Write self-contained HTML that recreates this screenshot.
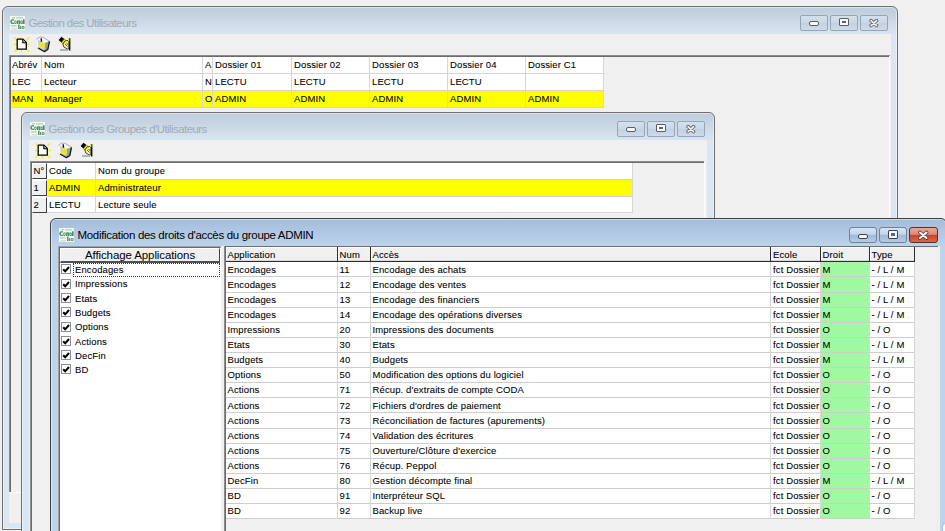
<!DOCTYPE html><html><head><meta charset="utf-8"><style>
*{margin:0;padding:0;box-sizing:border-box}
html,body{width:945px;height:531px;overflow:hidden;background:#f0f0f0;position:relative;font-family:"Liberation Sans",sans-serif;}
.a{position:absolute}
.win{position:absolute;border:1px solid #6f6f6f;border-radius:6px 6px 0 0;box-shadow:inset 0 0 0 1px rgba(255,255,255,.45)}
.inact{background:linear-gradient(#bdcddd 0px,#c7d5e3 10px,#d8e5f1 27px,#dae6f2 28px)}
.act{border-color:#3f3f3f;background:linear-gradient(#a3bcd8 0px,#afc7e2 12px,#bcd3ea 27px,#bdd4eb 28px)}
.client{position:absolute;background:#f0f0f0}
.title{position:absolute;font-size:12px;letter-spacing:-0.55px;white-space:nowrap;line-height:14px}
.tb{position:absolute;height:16px;width:28px;border:1px solid #95a5ba;border-radius:2px;background:linear-gradient(#d4e0ec,#c9d7e6 50%,#c2d1e2 51%,#cfdbe8)}
.tba{position:absolute;height:15.5px;width:28px;border:1px solid #6f829a;border-radius:3px;background:linear-gradient(#d6e4f3,#c3d5ea 45%,#9fb9d6 50%,#b4cbe3)}
.tbc{position:absolute;height:15.5px;width:29px;border:1px solid #5e2a2a;border-radius:3px;background:linear-gradient(#eaa797,#de8a76 45%,#c6452b 52%,#d6684d)}
.t{position:absolute;font-size:9.5px;white-space:nowrap;line-height:12px;letter-spacing:0.12px;color:#000;-webkit-text-stroke:0.08px #000}
.hl{position:absolute;height:1px;background:#d6d6d6}
.vl{position:absolute;width:1px;background:#d6d6d6}
</style></head><body>
<div class="win inact" style="left:2px;top:6px;width:896px;height:524px"></div>
<div class="client" style="left:9px;top:34px;width:882px;height:489px"></div>
<svg class="a" style="left:9.7px;top:16px" width="15" height="14" viewBox="0 0 15 14">
<rect x="0" y="0" width="15" height="14" fill="#f4f8f4"/>
<rect x="2" y="1.2" width="3" height="1.3" fill="#b5d3b8"/><rect x="6" y="1.2" width="7" height="1.3" fill="#b5d3b8"/>
<path d="M0.3 5.5 Q0.3 3.2 2.5 3.2 L4 3.2 L4 4.6 L2.6 4.6 Q1.8 4.6 1.8 5.7 Q1.8 6.8 2.6 6.8 L4 6.8 L4 8 L2.5 8 Q0.3 8 0.3 5.7 Z" fill="#4a8c5e"/>
<rect x="4.3" y="4.4" width="2.3" height="3.6" rx="1" fill="#4f9163"/>
<rect x="7" y="4.4" width="3.4" height="3.6" fill="#4f9163"/>
<rect x="10.6" y="4.4" width="2.2" height="3.6" rx="0.8" fill="#4f9163"/>
<rect x="13" y="3.3" width="1.6" height="4.7" fill="#4a8c5e"/>
<rect x="5" y="5.4" width="0.9" height="1.6" fill="#cfe3d0"/><rect x="8.3" y="5.4" width="0.5" height="2.6" fill="#cfe3d0"/><rect x="11.3" y="5.4" width="0.8" height="1.6" fill="#cfe3d0"/>
<rect x="1" y="9.2" width="5.5" height="1.4" fill="#b5d3b8"/>
<rect x="8" y="8.6" width="1.6" height="4.4" fill="#5d9a6e"/>
<rect x="10" y="10" width="1.2" height="3" fill="#5d9a6e"/>
<rect x="11.6" y="10" width="3" height="3" rx="1.3" fill="#5d9a6e"/><rect x="12.6" y="11" width="1" height="1" fill="#dfeedf"/>
<rect x="1.5" y="12.3" width="5.5" height="1.2" fill="#c5dcc8"/>
</svg>
<div class="title" style="left:28.5px;top:15.7px;font-size:11.5px;letter-spacing:-0.56px;color:#a4a9b2">Gestion des Utilisateurs</div>
<div class="tb" style="left:800px;top:15px"></div>
<div class="tb" style="left:830px;top:15px"></div>
<div class="tb" style="left:860px;top:15px"></div>
<div class="a" style="left:809px;top:21px;width:10px;height:5px;border:1px solid #5a5f66;border-radius:2px;background:#fafafa"></div>
<div class="a" style="left:839px;top:18px;width:10px;height:8px;border:1px solid #5a5f66;border-radius:1px;background:#fafafa"><div class="a" style="left:2px;top:2px;width:4px;height:2px;background:#60656c;border:0"></div></div>
<svg class="a" style="left:868px;top:18px" width="12" height="10" viewBox="0 0 12 10"><path d="M3 2.6 L8.6 7.6 M8.6 2.6 L3 7.6" stroke="#60656c" stroke-width="3.4" stroke-linecap="round"/><path d="M3 2.6 L8.6 7.6 M8.6 2.6 L3 7.6" stroke="#f4f4f4" stroke-width="1.6" stroke-linecap="round"/></svg>
<svg class="a" style="left:13.5px;top:37px" width="16" height="16" viewBox="0 0 16 16">
<g stroke="#f4f400" stroke-width="1.4" stroke-linecap="round"><path d="M0.8 0.8 L3 3 M14.8 0.8 L12.8 2.8 M0.5 7.5 L2 7.5 M15.2 7.5 L14 7.5 M0.8 14.3 L2.8 12.3 M14.8 14.3 L12.8 12.3 M7.5 15 L7.5 13.8 M6 0.7 L6 1.5"/></g>
<path d="M3.2 2.2 L9 2.2 L12.3 5.5 L12.3 12.2 L3.2 12.2 Z" fill="#fff" stroke="#000" stroke-width="1.3" stroke-linejoin="round"/>
<path d="M8.8 2.5 L8.8 5.8 L12 5.8" fill="#ccc" stroke="#000" stroke-width="1.1"/>
</svg>
<svg class="a" style="left:34.0px;top:35px" width="18" height="19" viewBox="0 0 18 19">
<path d="M2.5 4 L6 2 L9 2.3 L15.5 6.3 L13.8 14.5 L10.5 16.6 L4 13 Z" fill="#cfcfcf"/>
<path d="M2.5 4 L6 2 L9 2.3 L15.5 6.3 L11 8 Z" fill="#f6f6f6"/>
<path d="M11 8 L15.5 6.3 L13.8 14.5 L10.5 16.6 Z" fill="#9c9c9c"/>
<path d="M3 4.5 L4.3 12.5" stroke="#ffffff" stroke-width="1"/>
<path d="M2.5 4 L6 2 L9 2.3 L15.5 6.3" fill="none" stroke="#a0a0a0" stroke-width="0.8"/>
<path d="M15.5 6.3 L13.8 14.5 L10.5 16.6 L4 13" fill="none" stroke="#1a1a1a" stroke-width="1.3" stroke-linejoin="round"/>
<path d="M7.2 3.2 L7.5 6.8" stroke="#111" stroke-width="1.4"/>
<path d="M5.5 9 L8 7.5 L10.8 8.5 L11.2 12 L8.5 13.6 L5.4 12 Z" fill="#f2f200"/><circle cx="8.4" cy="10.6" r="1.1" fill="#c8c8a0"/>
</svg>
<svg class="a" style="left:56.0px;top:35px" width="18" height="19" viewBox="0 0 18 19">
<path d="M2.6 5 L5.5 1.8 L8.3 4 L5.4 7.5 Z" fill="#000"/>
<path d="M5.4 7.5 L8.3 4 L9.8 5.4 L6.9 8.9 Z" fill="#f0f000" stroke="#222" stroke-width="0.5"/>
<path d="M6.9 8.9 L9.8 5.4 L11 6 L13 4 L13 13 L11.5 14 L7.8 12 Z" fill="#f7f790" stroke="#1a1a1a" stroke-width="0.8" stroke-linejoin="round"/>
<path d="M9 9 L11.5 11.5 M10.3 7.8 L12.6 10.2" stroke="#333" stroke-width="0.8"/>
<path d="M13.6 3.2 L13.6 15.5" stroke="#101010" stroke-width="1.6"/>
<path d="M12.7 3.5 L12.7 6" stroke="#f0f000" stroke-width="1.3"/>
<path d="M4 15 L12 15" stroke="#8c8c8c" stroke-width="1.2"/>
</svg>
<div class="a" style="left:9px;top:55px;width:881px;height:1px;background:#8c8c8c;"></div>
<div class="a" style="left:9px;top:55px;width:1px;height:437px;background:#8c8c8c;"></div>
<div class="a" style="left:10px;top:56px;width:880px;height:1px;background:#6c6c6c;"></div>
<div class="a" style="left:10px;top:56px;width:1px;height:436px;background:#6c6c6c;"></div>
<div class="a" style="left:9px;top:492px;width:881px;height:1px;background:#ffffff;"></div>
<div class="a" style="left:889px;top:56px;width:1px;height:437px;background:#fbfbfb;"></div>
<div class="a" style="left:11px;top:57px;width:593px;height:50px;background:#ffffff;"></div>
<div class="a" style="left:11px;top:91px;width:593px;height:16px;background:#ffff00;"></div>
<div class="vl" style="left:41px;top:57px;height:50px"></div>
<div class="vl" style="left:202px;top:57px;height:50px"></div>
<div class="vl" style="left:212px;top:57px;height:50px"></div>
<div class="vl" style="left:291px;top:57px;height:50px"></div>
<div class="vl" style="left:369px;top:57px;height:50px"></div>
<div class="vl" style="left:447px;top:57px;height:50px"></div>
<div class="vl" style="left:525px;top:57px;height:50px"></div>
<div class="vl" style="left:603px;top:57px;height:50px"></div>
<div class="hl" style="left:11px;top:73px;width:593px"></div>
<div class="hl" style="left:11px;top:90px;width:593px"></div>
<div class="hl" style="left:11px;top:107px;width:593px"></div>
<div class="t" style="left:12px;top:58.94px;">Abrév</div>
<div class="t" style="left:44px;top:58.94px;">Nom</div>
<div class="t" style="left:205px;top:58.94px;">A</div>
<div class="t" style="left:215px;top:58.94px;">Dossier 01</div>
<div class="t" style="left:294px;top:58.94px;">Dossier 02</div>
<div class="t" style="left:372px;top:58.94px;">Dossier 03</div>
<div class="t" style="left:450px;top:58.94px;">Dossier 04</div>
<div class="t" style="left:528px;top:58.94px;">Dossier C1</div>
<div class="t" style="left:12px;top:75.84px;">LEC</div>
<div class="t" style="left:44px;top:75.84px;">Lecteur</div>
<div class="t" style="left:205px;top:75.84px;">N</div>
<div class="t" style="left:215px;top:75.84px;">LECTU</div>
<div class="t" style="left:294px;top:75.84px;">LECTU</div>
<div class="t" style="left:372px;top:75.84px;">LECTU</div>
<div class="t" style="left:450px;top:75.84px;">LECTU</div>
<div class="t" style="left:12px;top:92.74px;">MAN</div>
<div class="t" style="left:44px;top:92.74px;">Manager</div>
<div class="t" style="left:205px;top:92.74px;">O</div>
<div class="t" style="left:215px;top:92.74px;">ADMIN</div>
<div class="t" style="left:294px;top:92.74px;">ADMIN</div>
<div class="t" style="left:372px;top:92.74px;">ADMIN</div>
<div class="t" style="left:450px;top:92.74px;">ADMIN</div>
<div class="t" style="left:528px;top:92.74px;">ADMIN</div>
<div class="win inact" style="left:21px;top:112px;width:694px;height:449px"></div>
<div class="client" style="left:29px;top:140px;width:678px;height:400px"></div>
<svg class="a" style="left:29.7px;top:122px" width="15" height="14" viewBox="0 0 15 14">
<rect x="0" y="0" width="15" height="14" fill="#f4f8f4"/>
<rect x="2" y="1.2" width="3" height="1.3" fill="#b5d3b8"/><rect x="6" y="1.2" width="7" height="1.3" fill="#b5d3b8"/>
<path d="M0.3 5.5 Q0.3 3.2 2.5 3.2 L4 3.2 L4 4.6 L2.6 4.6 Q1.8 4.6 1.8 5.7 Q1.8 6.8 2.6 6.8 L4 6.8 L4 8 L2.5 8 Q0.3 8 0.3 5.7 Z" fill="#4a8c5e"/>
<rect x="4.3" y="4.4" width="2.3" height="3.6" rx="1" fill="#4f9163"/>
<rect x="7" y="4.4" width="3.4" height="3.6" fill="#4f9163"/>
<rect x="10.6" y="4.4" width="2.2" height="3.6" rx="0.8" fill="#4f9163"/>
<rect x="13" y="3.3" width="1.6" height="4.7" fill="#4a8c5e"/>
<rect x="5" y="5.4" width="0.9" height="1.6" fill="#cfe3d0"/><rect x="8.3" y="5.4" width="0.5" height="2.6" fill="#cfe3d0"/><rect x="11.3" y="5.4" width="0.8" height="1.6" fill="#cfe3d0"/>
<rect x="1" y="9.2" width="5.5" height="1.4" fill="#b5d3b8"/>
<rect x="8" y="8.6" width="1.6" height="4.4" fill="#5d9a6e"/>
<rect x="10" y="10" width="1.2" height="3" fill="#5d9a6e"/>
<rect x="11.6" y="10" width="3" height="3" rx="1.3" fill="#5d9a6e"/><rect x="12.6" y="11" width="1" height="1" fill="#dfeedf"/>
<rect x="1.5" y="12.3" width="5.5" height="1.2" fill="#c5dcc8"/>
</svg>
<div class="title" style="left:48.5px;top:121.7px;font-size:11.5px;letter-spacing:-0.56px;color:#a4a9b2">Gestion des Groupes d'Utilisateurs</div>
<div class="tb" style="left:617px;top:121px"></div>
<div class="tb" style="left:647px;top:121px"></div>
<div class="tb" style="left:677px;top:121px"></div>
<div class="a" style="left:626px;top:127px;width:10px;height:5px;border:1px solid #5a5f66;border-radius:2px;background:#fafafa"></div>
<div class="a" style="left:656px;top:124px;width:10px;height:8px;border:1px solid #5a5f66;border-radius:1px;background:#fafafa"><div class="a" style="left:2px;top:2px;width:4px;height:2px;background:#60656c;border:0"></div></div>
<svg class="a" style="left:685px;top:124px" width="12" height="10" viewBox="0 0 12 10"><path d="M3 2.6 L8.6 7.6 M8.6 2.6 L3 7.6" stroke="#60656c" stroke-width="3.4" stroke-linecap="round"/><path d="M3 2.6 L8.6 7.6 M8.6 2.6 L3 7.6" stroke="#f4f4f4" stroke-width="1.6" stroke-linecap="round"/></svg>
<svg class="a" style="left:35.2px;top:143px" width="16" height="16" viewBox="0 0 16 16">
<g stroke="#f4f400" stroke-width="1.4" stroke-linecap="round"><path d="M0.8 0.8 L3 3 M14.8 0.8 L12.8 2.8 M0.5 7.5 L2 7.5 M15.2 7.5 L14 7.5 M0.8 14.3 L2.8 12.3 M14.8 14.3 L12.8 12.3 M7.5 15 L7.5 13.8 M6 0.7 L6 1.5"/></g>
<path d="M3.2 2.2 L9 2.2 L12.3 5.5 L12.3 12.2 L3.2 12.2 Z" fill="#fff" stroke="#000" stroke-width="1.3" stroke-linejoin="round"/>
<path d="M8.8 2.5 L8.8 5.8 L12 5.8" fill="#ccc" stroke="#000" stroke-width="1.1"/>
</svg>
<svg class="a" style="left:55.7px;top:141px" width="18" height="19" viewBox="0 0 18 19">
<path d="M2.5 4 L6 2 L9 2.3 L15.5 6.3 L13.8 14.5 L10.5 16.6 L4 13 Z" fill="#cfcfcf"/>
<path d="M2.5 4 L6 2 L9 2.3 L15.5 6.3 L11 8 Z" fill="#f6f6f6"/>
<path d="M11 8 L15.5 6.3 L13.8 14.5 L10.5 16.6 Z" fill="#9c9c9c"/>
<path d="M3 4.5 L4.3 12.5" stroke="#ffffff" stroke-width="1"/>
<path d="M2.5 4 L6 2 L9 2.3 L15.5 6.3" fill="none" stroke="#a0a0a0" stroke-width="0.8"/>
<path d="M15.5 6.3 L13.8 14.5 L10.5 16.6 L4 13" fill="none" stroke="#1a1a1a" stroke-width="1.3" stroke-linejoin="round"/>
<path d="M7.2 3.2 L7.5 6.8" stroke="#111" stroke-width="1.4"/>
<path d="M5.5 9 L8 7.5 L10.8 8.5 L11.2 12 L8.5 13.6 L5.4 12 Z" fill="#f2f200"/><circle cx="8.4" cy="10.6" r="1.1" fill="#c8c8a0"/>
</svg>
<svg class="a" style="left:77.7px;top:141px" width="18" height="19" viewBox="0 0 18 19">
<path d="M2.6 5 L5.5 1.8 L8.3 4 L5.4 7.5 Z" fill="#000"/>
<path d="M5.4 7.5 L8.3 4 L9.8 5.4 L6.9 8.9 Z" fill="#f0f000" stroke="#222" stroke-width="0.5"/>
<path d="M6.9 8.9 L9.8 5.4 L11 6 L13 4 L13 13 L11.5 14 L7.8 12 Z" fill="#f7f790" stroke="#1a1a1a" stroke-width="0.8" stroke-linejoin="round"/>
<path d="M9 9 L11.5 11.5 M10.3 7.8 L12.6 10.2" stroke="#333" stroke-width="0.8"/>
<path d="M13.6 3.2 L13.6 15.5" stroke="#101010" stroke-width="1.6"/>
<path d="M12.7 3.5 L12.7 6" stroke="#f0f000" stroke-width="1.3"/>
<path d="M4 15 L12 15" stroke="#8c8c8c" stroke-width="1.2"/>
</svg>
<div class="a" style="left:30px;top:161px;width:674px;height:1px;background:#8c8c8c;"></div>
<div class="a" style="left:30px;top:161px;width:1px;height:400px;background:#8c8c8c;"></div>
<div class="a" style="left:31px;top:162px;width:673px;height:1px;background:#6c6c6c;"></div>
<div class="a" style="left:31px;top:162px;width:1px;height:400px;background:#6c6c6c;"></div>
<div class="a" style="left:704px;top:162px;width:1px;height:400px;background:#ffffff;"></div>
<div class="a" style="left:32px;top:163px;width:601px;height:50px;background:#ffffff;"></div>
<div class="a" style="left:47px;top:180px;width:586px;height:16px;background:#ffff00;"></div>
<div class="a" style="left:32px;top:163px;width:15px;height:16px;background:#f0f0f0;border-left:1px solid #fff;border-top:1px solid #fff;border-right:1px solid #404040;border-bottom:1px solid #404040"></div>
<div class="a" style="left:32px;top:180px;width:15px;height:16px;background:#f0f0f0;border-left:1px solid #fff;border-top:1px solid #fff;border-right:1px solid #404040;border-bottom:1px solid #404040"></div>
<div class="a" style="left:32px;top:197px;width:15px;height:16px;background:#f0f0f0;border-left:1px solid #fff;border-top:1px solid #fff;border-right:1px solid #404040;border-bottom:1px solid #404040"></div>
<div class="vl" style="left:95px;top:163px;height:50px"></div>
<div class="vl" style="left:632px;top:163px;height:50px"></div>
<div class="hl" style="left:47px;top:179px;width:586px"></div>
<div class="hl" style="left:47px;top:196px;width:586px"></div>
<div class="hl" style="left:47px;top:212px;width:586px"></div>
<div class="t" style="left:33.5px;top:164.84px;">N°</div>
<div class="t" style="left:49px;top:164.84px;">Code</div>
<div class="t" style="left:98px;top:164.84px;">Nom du groupe</div>
<div class="t" style="left:33.5px;top:181.74px;">1</div>
<div class="t" style="left:49px;top:181.74px;">ADMIN</div>
<div class="t" style="left:98px;top:181.74px;">Administrateur</div>
<div class="t" style="left:33.5px;top:198.54px;">2</div>
<div class="t" style="left:49px;top:198.54px;">LECTU</div>
<div class="t" style="left:98px;top:198.54px;">Lecture seule</div>
<div class="win act" style="left:50px;top:218px;width:897px;height:343px"></div>
<div class="client" style="left:58px;top:246px;width:882px;height:300px"></div>
<svg class="a" style="left:58.7px;top:228px" width="15" height="14" viewBox="0 0 15 14">
<rect x="0" y="0" width="15" height="14" fill="#f4f8f4"/>
<rect x="2" y="1.2" width="3" height="1.3" fill="#b5d3b8"/><rect x="6" y="1.2" width="7" height="1.3" fill="#b5d3b8"/>
<path d="M0.3 5.5 Q0.3 3.2 2.5 3.2 L4 3.2 L4 4.6 L2.6 4.6 Q1.8 4.6 1.8 5.7 Q1.8 6.8 2.6 6.8 L4 6.8 L4 8 L2.5 8 Q0.3 8 0.3 5.7 Z" fill="#4a8c5e"/>
<rect x="4.3" y="4.4" width="2.3" height="3.6" rx="1" fill="#4f9163"/>
<rect x="7" y="4.4" width="3.4" height="3.6" fill="#4f9163"/>
<rect x="10.6" y="4.4" width="2.2" height="3.6" rx="0.8" fill="#4f9163"/>
<rect x="13" y="3.3" width="1.6" height="4.7" fill="#4a8c5e"/>
<rect x="5" y="5.4" width="0.9" height="1.6" fill="#cfe3d0"/><rect x="8.3" y="5.4" width="0.5" height="2.6" fill="#cfe3d0"/><rect x="11.3" y="5.4" width="0.8" height="1.6" fill="#cfe3d0"/>
<rect x="1" y="9.2" width="5.5" height="1.4" fill="#b5d3b8"/>
<rect x="8" y="8.6" width="1.6" height="4.4" fill="#5d9a6e"/>
<rect x="10" y="10" width="1.2" height="3" fill="#5d9a6e"/>
<rect x="11.6" y="10" width="3" height="3" rx="1.3" fill="#5d9a6e"/><rect x="12.6" y="11" width="1" height="1" fill="#dfeedf"/>
<rect x="1.5" y="12.3" width="5.5" height="1.2" fill="#c5dcc8"/>
</svg>
<div class="title" style="left:77.5px;top:227.6px;font-size:11.5px;letter-spacing:-0.32px;color:#000">Modification des droits d'accès du groupe ADMIN</div>
<div class="tba" style="left:849px;top:227px"></div>
<div class="tba" style="left:879px;top:227px"></div>
<div class="tbc" style="left:909px;top:227px"></div>
<div class="a" style="left:858px;top:234px;width:10px;height:5px;border:1px solid #3c4450;border-radius:2px;background:#fafafa"></div>
<div class="a" style="left:888px;top:230px;width:10px;height:9px;border:1px solid #3c4450;border-radius:1px;background:#fafafa"><div class="a" style="left:2px;top:2px;width:4px;height:3px;background:#4a6a90;border:0"></div></div>
<svg class="a" style="left:917px;top:230px" width="13" height="10" viewBox="0 0 13 10"><path d="M3 2.5 L9.5 8 M9.5 2.5 L3 8" stroke="#5a3434" stroke-width="3.6" stroke-linecap="round"/><path d="M3 2.5 L9.5 8 M9.5 2.5 L3 8" stroke="#ffffff" stroke-width="2" stroke-linecap="round"/></svg>
<div class="a" style="left:58px;top:246px;width:163px;height:290px;background:#ffffff;border-left:1px solid #a0a0a0;border-top:1px solid #a0a0a0;"></div>
<div class="a" style="left:59px;top:247px;width:162px;height:290px;background:transparent;border-left:1px solid #696969;border-top:1px solid #696969;border-right:1px solid #fff"></div>
<div class="a" style="left:60px;top:248px;width:160px;height:15px;background:#f0f0f0;border-top:1px solid #fff;border-left:1px solid #fff;border-bottom:2px solid #505050;border-right:1px solid #404040"></div>
<div class="a" style="left:60px;top:248px;width:160px;text-align:center;font-size:11.5px;line-height:14px;letter-spacing:-0.1px;white-space:nowrap">Affichage Applications</div>
<div class="a" style="left:61px;top:264.30px;width:10px;height:10px;border:1px solid #8f8f8f;background:#fff"></div>
<svg class="a" style="left:62px;top:265.30px" width="8" height="8" viewBox="0 0 8 8"><path d="M1.2 4.2 L3.2 6.3 L7 2" fill="none" stroke="#000" stroke-width="2"/></svg>
<div class="t" style="left:75px;top:264.04px;">Encodages</div>
<div class="a" style="left:61px;top:278.60px;width:10px;height:10px;border:1px solid #8f8f8f;background:#fff"></div>
<svg class="a" style="left:62px;top:279.60px" width="8" height="8" viewBox="0 0 8 8"><path d="M1.2 4.2 L3.2 6.3 L7 2" fill="none" stroke="#000" stroke-width="2"/></svg>
<div class="t" style="left:75px;top:278.34px;">Impressions</div>
<div class="a" style="left:61px;top:292.90px;width:10px;height:10px;border:1px solid #8f8f8f;background:#fff"></div>
<svg class="a" style="left:62px;top:293.90px" width="8" height="8" viewBox="0 0 8 8"><path d="M1.2 4.2 L3.2 6.3 L7 2" fill="none" stroke="#000" stroke-width="2"/></svg>
<div class="t" style="left:75px;top:292.64px;">Etats</div>
<div class="a" style="left:61px;top:307.20px;width:10px;height:10px;border:1px solid #8f8f8f;background:#fff"></div>
<svg class="a" style="left:62px;top:308.20px" width="8" height="8" viewBox="0 0 8 8"><path d="M1.2 4.2 L3.2 6.3 L7 2" fill="none" stroke="#000" stroke-width="2"/></svg>
<div class="t" style="left:75px;top:306.94px;">Budgets</div>
<div class="a" style="left:61px;top:321.50px;width:10px;height:10px;border:1px solid #8f8f8f;background:#fff"></div>
<svg class="a" style="left:62px;top:322.50px" width="8" height="8" viewBox="0 0 8 8"><path d="M1.2 4.2 L3.2 6.3 L7 2" fill="none" stroke="#000" stroke-width="2"/></svg>
<div class="t" style="left:75px;top:321.24px;">Options</div>
<div class="a" style="left:61px;top:335.80px;width:10px;height:10px;border:1px solid #8f8f8f;background:#fff"></div>
<svg class="a" style="left:62px;top:336.80px" width="8" height="8" viewBox="0 0 8 8"><path d="M1.2 4.2 L3.2 6.3 L7 2" fill="none" stroke="#000" stroke-width="2"/></svg>
<div class="t" style="left:75px;top:335.54px;">Actions</div>
<div class="a" style="left:61px;top:350.10px;width:10px;height:10px;border:1px solid #8f8f8f;background:#fff"></div>
<svg class="a" style="left:62px;top:351.10px" width="8" height="8" viewBox="0 0 8 8"><path d="M1.2 4.2 L3.2 6.3 L7 2" fill="none" stroke="#000" stroke-width="2"/></svg>
<div class="t" style="left:75px;top:349.84px;">DecFin</div>
<div class="a" style="left:61px;top:364.40px;width:10px;height:10px;border:1px solid #8f8f8f;background:#fff"></div>
<svg class="a" style="left:62px;top:365.40px" width="8" height="8" viewBox="0 0 8 8"><path d="M1.2 4.2 L3.2 6.3 L7 2" fill="none" stroke="#000" stroke-width="2"/></svg>
<div class="t" style="left:75px;top:364.14px;">BD</div>
<div class="a" style="left:73px;top:263px;width:147px;height:14px;border:1px dotted #333"></div>
<div class="a" style="left:224px;top:246px;width:714px;height:1px;background:#6e6e6e;"></div>
<div class="a" style="left:224px;top:246px;width:1px;height:300px;background:#8c8c8c;"></div>
<div class="a" style="left:225px;top:247px;width:1px;height:300px;background:#6c6c6c;"></div>
<div class="a" style="left:937px;top:247px;width:1px;height:300px;background:#ececec;"></div>
<div class="a" style="left:226px;top:262px;width:688px;height:257px;background:#ffffff;"></div>
<div class="a" style="left:226px;top:247px;width:111px;height:14px;background:#f0f0f0;border-top:1px solid #fff;border-left:1px solid #fff"></div>
<div class="a" style="left:338px;top:247px;width:32px;height:14px;background:#f0f0f0;border-top:1px solid #fff;border-left:1px solid #fff"></div>
<div class="a" style="left:371px;top:247px;width:399px;height:14px;background:#f0f0f0;border-top:1px solid #fff;border-left:1px solid #fff"></div>
<div class="a" style="left:771px;top:247px;width:49px;height:14px;background:#f0f0f0;border-top:1px solid #fff;border-left:1px solid #fff"></div>
<div class="a" style="left:821px;top:247px;width:48px;height:14px;background:#f0f0f0;border-top:1px solid #fff;border-left:1px solid #fff"></div>
<div class="a" style="left:870px;top:247px;width:44px;height:14px;background:#f0f0f0;border-top:1px solid #fff;border-left:1px solid #fff"></div>
<div class="a" style="left:226px;top:261px;width:688px;height:1px;background:#2c2c2c;"></div>
<div class="a" style="left:226px;top:260px;width:688px;height:1px;background:#d8d8d8;"></div>
<div class="a" style="left:337px;top:247px;width:1px;height:15px;background:#2c2c2c;"></div>
<div class="a" style="left:370px;top:247px;width:1px;height:15px;background:#2c2c2c;"></div>
<div class="a" style="left:770px;top:247px;width:1px;height:15px;background:#2c2c2c;"></div>
<div class="a" style="left:820px;top:247px;width:1px;height:15px;background:#2c2c2c;"></div>
<div class="a" style="left:869px;top:247px;width:1px;height:15px;background:#2c2c2c;"></div>
<div class="a" style="left:914px;top:247px;width:1px;height:15px;background:#2c2c2c;"></div>
<div class="a" style="left:821px;top:262px;width:48px;height:256px;background:#a0f8a0;"></div>
<div class="hl" style="left:226px;top:276px;width:688px;height:1px;background:#cdcdcd"></div>
<div class="hl" style="left:226px;top:292px;width:688px;height:1px;background:#cdcdcd"></div>
<div class="hl" style="left:226px;top:307px;width:688px;height:1px;background:#cdcdcd"></div>
<div class="hl" style="left:226px;top:322px;width:688px;height:1px;background:#cdcdcd"></div>
<div class="hl" style="left:226px;top:337px;width:688px;height:1px;background:#cdcdcd"></div>
<div class="hl" style="left:226px;top:352px;width:688px;height:1px;background:#cdcdcd"></div>
<div class="hl" style="left:226px;top:367px;width:688px;height:1px;background:#cdcdcd"></div>
<div class="hl" style="left:226px;top:382px;width:688px;height:1px;background:#cdcdcd"></div>
<div class="hl" style="left:226px;top:397px;width:688px;height:1px;background:#cdcdcd"></div>
<div class="hl" style="left:226px;top:412px;width:688px;height:1px;background:#cdcdcd"></div>
<div class="hl" style="left:226px;top:428px;width:688px;height:1px;background:#cdcdcd"></div>
<div class="hl" style="left:226px;top:443px;width:688px;height:1px;background:#cdcdcd"></div>
<div class="hl" style="left:226px;top:458px;width:688px;height:1px;background:#cdcdcd"></div>
<div class="hl" style="left:226px;top:473px;width:688px;height:1px;background:#cdcdcd"></div>
<div class="hl" style="left:226px;top:488px;width:688px;height:1px;background:#cdcdcd"></div>
<div class="hl" style="left:226px;top:503px;width:688px;height:1px;background:#cdcdcd"></div>
<div class="hl" style="left:226px;top:518px;width:688px;height:1px;background:#cdcdcd"></div>
<div class="vl" style="left:337px;top:262px;height:257px"></div>
<div class="vl" style="left:370px;top:262px;height:257px"></div>
<div class="vl" style="left:770px;top:262px;height:257px"></div>
<div class="vl" style="left:820px;top:262px;height:257px"></div>
<div class="vl" style="left:869px;top:262px;height:257px"></div>
<div class="vl" style="left:914px;top:262px;height:257px"></div>
<div class="t" style="left:227.5px;top:248.54px;">Application</div>
<div class="t" style="left:339.5px;top:248.54px;">Num</div>
<div class="t" style="left:372.5px;top:248.54px;">Accès</div>
<div class="t" style="left:773px;top:248.54px;">Ecole</div>
<div class="t" style="left:822.5px;top:248.54px;">Droit</div>
<div class="t" style="left:871.5px;top:248.54px;">Type</div>
<div class="t" style="left:227.5px;top:263.54px;">Encodages</div>
<div class="t" style="left:339.5px;top:263.54px;">11</div>
<div class="t" style="left:372.5px;top:263.54px;">Encodage des achats</div>
<div class="t" style="left:773px;top:263.54px;">fct Dossier</div>
<div class="t" style="left:822.5px;top:263.54px;">M</div>
<div class="t" style="left:871.5px;top:263.54px;">- / L / M</div>
<div class="t" style="left:227.5px;top:278.65px;">Encodages</div>
<div class="t" style="left:339.5px;top:278.65px;">12</div>
<div class="t" style="left:372.5px;top:278.65px;">Encodage des ventes</div>
<div class="t" style="left:773px;top:278.65px;">fct Dossier</div>
<div class="t" style="left:822.5px;top:278.65px;">M</div>
<div class="t" style="left:871.5px;top:278.65px;">- / L / M</div>
<div class="t" style="left:227.5px;top:293.76px;">Encodages</div>
<div class="t" style="left:339.5px;top:293.76px;">13</div>
<div class="t" style="left:372.5px;top:293.76px;">Encodage des financiers</div>
<div class="t" style="left:773px;top:293.76px;">fct Dossier</div>
<div class="t" style="left:822.5px;top:293.76px;">M</div>
<div class="t" style="left:871.5px;top:293.76px;">- / L / M</div>
<div class="t" style="left:227.5px;top:308.87px;">Encodages</div>
<div class="t" style="left:339.5px;top:308.87px;">14</div>
<div class="t" style="left:372.5px;top:308.87px;">Encodage des opérations diverses</div>
<div class="t" style="left:773px;top:308.87px;">fct Dossier</div>
<div class="t" style="left:822.5px;top:308.87px;">M</div>
<div class="t" style="left:871.5px;top:308.87px;">- / L / M</div>
<div class="t" style="left:227.5px;top:323.98px;">Impressions</div>
<div class="t" style="left:339.5px;top:323.98px;">20</div>
<div class="t" style="left:372.5px;top:323.98px;">Impressions des documents</div>
<div class="t" style="left:773px;top:323.98px;">fct Dossier</div>
<div class="t" style="left:822.5px;top:323.98px;">O</div>
<div class="t" style="left:871.5px;top:323.98px;">- / O</div>
<div class="t" style="left:227.5px;top:339.09px;">Etats</div>
<div class="t" style="left:339.5px;top:339.09px;">30</div>
<div class="t" style="left:372.5px;top:339.09px;">Etats</div>
<div class="t" style="left:773px;top:339.09px;">fct Dossier</div>
<div class="t" style="left:822.5px;top:339.09px;">M</div>
<div class="t" style="left:871.5px;top:339.09px;">- / L / M</div>
<div class="t" style="left:227.5px;top:354.20px;">Budgets</div>
<div class="t" style="left:339.5px;top:354.20px;">40</div>
<div class="t" style="left:372.5px;top:354.20px;">Budgets</div>
<div class="t" style="left:773px;top:354.20px;">fct Dossier</div>
<div class="t" style="left:822.5px;top:354.20px;">M</div>
<div class="t" style="left:871.5px;top:354.20px;">- / L / M</div>
<div class="t" style="left:227.5px;top:369.31px;">Options</div>
<div class="t" style="left:339.5px;top:369.31px;">50</div>
<div class="t" style="left:372.5px;top:369.31px;">Modification des options du logiciel</div>
<div class="t" style="left:773px;top:369.31px;">fct Dossier</div>
<div class="t" style="left:822.5px;top:369.31px;">O</div>
<div class="t" style="left:871.5px;top:369.31px;">- / O</div>
<div class="t" style="left:227.5px;top:384.42px;">Actions</div>
<div class="t" style="left:339.5px;top:384.42px;">71</div>
<div class="t" style="left:372.5px;top:384.42px;">Récup. d'extraits de compte CODA</div>
<div class="t" style="left:773px;top:384.42px;">fct Dossier</div>
<div class="t" style="left:822.5px;top:384.42px;">O</div>
<div class="t" style="left:871.5px;top:384.42px;">- / O</div>
<div class="t" style="left:227.5px;top:399.53px;">Actions</div>
<div class="t" style="left:339.5px;top:399.53px;">72</div>
<div class="t" style="left:372.5px;top:399.53px;">Fichiers d'ordres de paiement</div>
<div class="t" style="left:773px;top:399.53px;">fct Dossier</div>
<div class="t" style="left:822.5px;top:399.53px;">O</div>
<div class="t" style="left:871.5px;top:399.53px;">- / O</div>
<div class="t" style="left:227.5px;top:414.64px;">Actions</div>
<div class="t" style="left:339.5px;top:414.64px;">73</div>
<div class="t" style="left:372.5px;top:414.64px;">Réconciliation de factures (apurements)</div>
<div class="t" style="left:773px;top:414.64px;">fct Dossier</div>
<div class="t" style="left:822.5px;top:414.64px;">O</div>
<div class="t" style="left:871.5px;top:414.64px;">- / O</div>
<div class="t" style="left:227.5px;top:429.75px;">Actions</div>
<div class="t" style="left:339.5px;top:429.75px;">74</div>
<div class="t" style="left:372.5px;top:429.75px;">Validation des écritures</div>
<div class="t" style="left:773px;top:429.75px;">fct Dossier</div>
<div class="t" style="left:822.5px;top:429.75px;">O</div>
<div class="t" style="left:871.5px;top:429.75px;">- / O</div>
<div class="t" style="left:227.5px;top:444.86px;">Actions</div>
<div class="t" style="left:339.5px;top:444.86px;">75</div>
<div class="t" style="left:372.5px;top:444.86px;">Ouverture/Clôture d'exercice</div>
<div class="t" style="left:773px;top:444.86px;">fct Dossier</div>
<div class="t" style="left:822.5px;top:444.86px;">O</div>
<div class="t" style="left:871.5px;top:444.86px;">- / O</div>
<div class="t" style="left:227.5px;top:459.97px;">Actions</div>
<div class="t" style="left:339.5px;top:459.97px;">76</div>
<div class="t" style="left:372.5px;top:459.97px;">Récup. Peppol</div>
<div class="t" style="left:773px;top:459.97px;">fct Dossier</div>
<div class="t" style="left:822.5px;top:459.97px;">O</div>
<div class="t" style="left:871.5px;top:459.97px;">- / O</div>
<div class="t" style="left:227.5px;top:475.08px;">DecFin</div>
<div class="t" style="left:339.5px;top:475.08px;">80</div>
<div class="t" style="left:372.5px;top:475.08px;">Gestion décompte final</div>
<div class="t" style="left:773px;top:475.08px;">fct Dossier</div>
<div class="t" style="left:822.5px;top:475.08px;">M</div>
<div class="t" style="left:871.5px;top:475.08px;">- / L / M</div>
<div class="t" style="left:227.5px;top:490.19px;">BD</div>
<div class="t" style="left:339.5px;top:490.19px;">91</div>
<div class="t" style="left:372.5px;top:490.19px;">Interpréteur SQL</div>
<div class="t" style="left:773px;top:490.19px;">fct Dossier</div>
<div class="t" style="left:822.5px;top:490.19px;">O</div>
<div class="t" style="left:871.5px;top:490.19px;">- / O</div>
<div class="t" style="left:227.5px;top:505.30px;">BD</div>
<div class="t" style="left:339.5px;top:505.30px;">92</div>
<div class="t" style="left:372.5px;top:505.30px;">Backup live</div>
<div class="t" style="left:773px;top:505.30px;">fct Dossier</div>
<div class="t" style="left:822.5px;top:505.30px;">O</div>
<div class="t" style="left:871.5px;top:505.30px;">- / O</div>
<div class="a" style="left:942px;top:522.5px;width:10px;height:12px;background:#fff;border-left:1px solid #a8c4e4;border-top:1px solid #a8c4e4;border-radius:4px 0 0 0"></div>
</body></html>
